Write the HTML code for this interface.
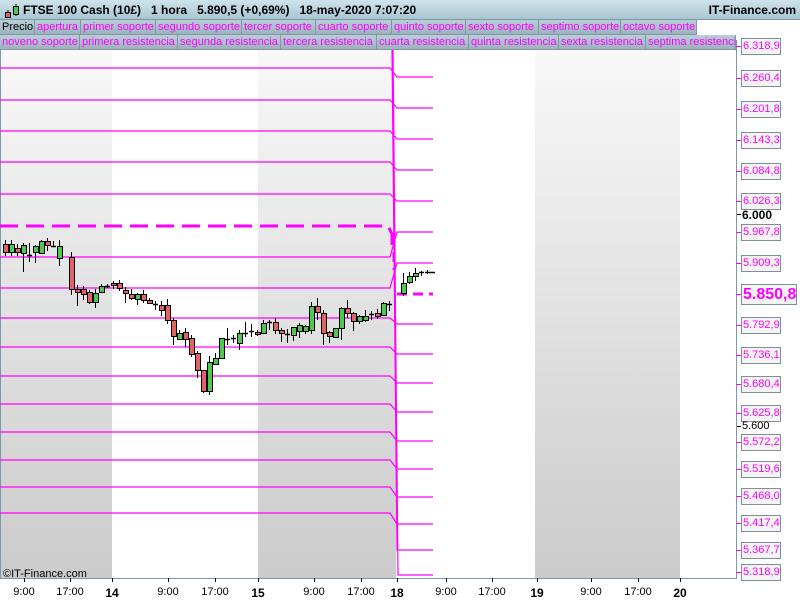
<!DOCTYPE html>
<html><head><meta charset="utf-8"><style>
*{margin:0;padding:0;box-sizing:border-box}
body{width:800px;height:600px;overflow:hidden;background:#fff;font-family:"Liberation Sans",sans-serif;position:relative}
#hdr{position:absolute;left:0;top:0;width:800px;height:20px;background:linear-gradient(#cfe3ea,#a8c6d2);border-bottom:1px solid #7f98a5;font-size:12px;font-weight:bold;line-height:20px}
.row{position:absolute;left:0;height:15px;display:flex;font-size:11px;line-height:14px}
.row div{background:linear-gradient(#b9cfd8,#9cb3be);border-right:1px solid #7f98a5;border-bottom:1px solid #7f98a5;color:#ff00ff;padding-left:2px;white-space:nowrap;overflow:hidden}
#ax div{position:absolute;font-size:11px}
.lb{position:absolute;left:741px;width:40px;height:17px;border:1px solid #7f8f99;background:#f4f4f4;color:#ff00ff;font-size:12px;line-height:15px;padding-left:1px;white-space:nowrap;overflow:hidden}
.tk{position:absolute;left:736px;width:5px;height:1px;background:#ff00ff}
.bt{position:absolute;top:586px;font-size:11px;transform:translateX(-50%)}
</style></head><body>
<div id="hdr"><svg style="position:absolute;left:3px;top:3px" width="16" height="16"><line x1="5" y1="7" x2="5" y2="15" stroke="#000"/><rect x="2.5" y="9.5" width="5" height="5" fill="#e06060" stroke="#000"/><line x1="13" y1="1" x2="13" y2="13" stroke="#000"/><rect x="10.5" y="3.5" width="5" height="8" fill="#4ec94e" stroke="#000"/></svg>
<span style="position:absolute;left:23px">FTSE 100 Cash (10£)&nbsp;&nbsp;&nbsp;1 hora&nbsp;&nbsp;&nbsp;5.890,5 (+0,69%)&nbsp;&nbsp;&nbsp;18-may-2020 7:07:20</span>
<span style="position:absolute;right:4px">IT-Finance.com</span></div>
<div class="row" style="top:20px"><div style="width:35px;color:#000">Precio</div><div style="width:46px">apertura</div><div style="width:75px">primer soporte</div><div style="width:86px">segundo soporte</div><div style="width:74px">tercer soporte</div><div style="width:76px">cuarto soporte</div><div style="width:74px">quinto soporte</div><div style="width:73px">sexto soporte</div><div style="width:82px">septimo soporte</div><div style="width:76px">octavo soporte</div></div>
<div class="row" style="top:35px"><div style="width:80px">noveno soporte</div><div style="width:98px">primera resistencia</div><div style="width:103px">segunda resistencia</div><div style="width:96px">tercera resistencia</div><div style="width:92px">cuarta resistencia</div><div style="width:90px">quinta resistencia</div><div style="width:87px">sexta resistencia</div><div style="width:90px">septima resistenci</div></div>
<svg id="ch" style="position:absolute;left:0;top:50px" width="736" height="528" viewBox="0 50 736 528">
<defs><linearGradient id="g" x1="0" y1="0" x2="0" y2="1"><stop offset="0" stop-color="#f8f8f8"/><stop offset="1" stop-color="#cbcbcb"/></linearGradient></defs>
<rect x="0" y="50" width="112" height="528" fill="url(#g)"/>
<rect x="258" y="50" width="138" height="528" fill="url(#g)"/>
<rect x="535" y="50" width="145" height="528" fill="url(#g)"/>
<line x1="0.5" y1="50" x2="0.5" y2="578" stroke="#7f98a5"/>
<g id="lines" stroke="#ff00ff" fill="none" stroke-width="1.2"></g>
<path d="M0 226H388l4 8v12" stroke="#ff00ff" stroke-width="3" fill="none" stroke-dasharray="18,8"/>
<path d="M394 252v18M397 294H433" stroke="#ff00ff" stroke-width="3" fill="none" stroke-dasharray="10,6"/>
<g id="cd"></g>
<text x="3" y="577" font-size="11" font-family="Liberation Sans">©IT-Finance.com</text>
</svg>
<div style="position:absolute;left:736px;top:40px;width:1px;height:539px;background:#7f98a5"></div>
<div style="position:absolute;left:0;top:578px;width:737px;height:1px;background:#7f98a5"></div>
<div id="ax"></div>
<script>
var L=[68,100,131,162,194,257,288,318,347,376,404,432,460,487,513];
var R=[77,108,139,170,201,232,263,324,354,383,412,441,469,497,524,550,575];
var s='';
for(var i=0;i<L.length;i++){s+='<path d="M0 '+L[i]+'H390L397 '+R[i]+'H433"/>';}
s+='<path d="M392 50L397 '+R[15]+'H433M393 50L398 '+R[16]+'H433"/>';
document.getElementById('lines').innerHTML=s;
var C=[[5,244,252,240,256],[11,252,244,240,256],[17,248,252,244,256],[23,253,245,243,272],[29,255,256,243,262],[35,252,246,245,263],[41,253,241,240,252],[47,241,245,238,251],[53,246,246,241,246],[59,258,246,240,266],[71,257,289,252,295],[77,289,292,285,306],[83,289,294,286,300],[89,292,302,290,304],[95,302,293,289,308],[101,292,286,284,293],[107,287,286,284,288],[113,283,285,281,289],[119,283,288,280,291],[125,290,293,287,303],[131,294,298,289,300],[137,299,294,293,305],[143,294,300,290,303],[149,300,303,298,304],[155,304,305,301,310],[161,305,310,301,316],[167,305,320,299,324],[173,320,336,318,345],[179,339,333,330,338],[185,332,339,328,347],[191,338,354,335,357],[197,353,370,351,378],[203,370,391,371,393],[209,391,362,356,395],[215,364,358,353,364],[221,358,338,338,357],[227,339,340,328,345],[233,338,338,335,343],[239,343,333,330,350],[245,333,333,322,337],[251,331,331,324,337],[257,332,334,330,336],[263,333,323,320,334],[269,323,322,320,330],[275,322,330,318,334],[281,330,333,328,342],[287,334,334,329,343],[293,335,327,327,341],[299,331,325,323,338],[305,331,326,325,334],[311,330,306,302,334],[317,306,312,298,320],[323,313,333,310,345],[329,332,336,331,343],[335,337,328,328,338],[341,328,308,307,340],[347,308,313,300,318],[353,313,321,312,331],[359,321,316,315,324],[365,320,316,310,322],[371,315,314,311,320],[377,313,316,309,319],[383,315,303,302,316],[389,304,305,301,311],[403,293,283,273,296],[409,282,276,272,284],[415,276,273,268,281],[421,272,272,271,276],[427,272,272,270,274],[432,272,272,272,272]];
var h='';
C.forEach(function(c){var x=c[0],o=c[1],cl=c[2],hi=c[3],lo=c[4];var t=Math.min(o,cl),bh=Math.abs(o-cl);
h+='<line x1="'+x+'.5" y1="'+hi+'" x2="'+x+'.5" y2="'+lo+'" stroke="#000"/>';
if(bh<2)h+='<line x1="'+(x-2)+'" y1="'+t+'.5" x2="'+(x+3)+'" y2="'+t+'.5" stroke="#000" stroke-width="1.5"/>';
else h+='<rect x="'+(x-2)+'.5" y="'+t+'.5" width="5" height="'+bh+'" fill="'+(cl<o?'#50c850':'#e06464')+'" stroke="#000"/>';});
document.getElementById('cd').innerHTML=h;
var A=[[46,'6.318,9'],[78,'6.260,4'],[109,'6.201,8'],[140,'6.143,3'],[171,'6.084,8'],[201,'6.026,3'],[232,'5.967,8'],[263,'5.909,3'],[325,'5.792,9'],[355,'5.736,1'],[384,'5.680,4'],[413,'5.625,8'],[442,'5.572,2'],[469,'5.519,6'],[496,'5.468,0'],[523,'5.417,4'],[550,'5.367,7'],[572,'5.318,9']];
var a='';
A.forEach(function(v){a+='<div class="tk" style="top:'+v[0]+'px"></div><div class="lb" style="top:'+(v[0]-8)+'px">'+v[1]+'</div>';});
a+='<div class="tk" style="top:294px"></div><div class="lb" style="top:284px;width:56px;height:21px;font-size:16px;font-weight:bold;line-height:19px">5.850,8</div>';
a+='<div style="position:absolute;left:737px;top:214px;width:4px;height:1px;background:#000"></div><div style="position:absolute;left:742px;top:208px;font-size:12px;font-weight:bold">6.000</div>';
a+='<div style="position:absolute;left:737px;top:426px;width:4px;height:1px;background:#000"></div><div style="position:absolute;left:742px;top:420px;font-size:11px">5.600</div>';
var B=[[24,'9:00'],[70,'17:00'],[112,'14',1],[168,'9:00'],[215,'17:00'],[258,'15',1],[314,'9:00'],[361,'17:00'],[397,'18',1],[446,'9:00'],[492,'17:00'],[537,'19',1],[591,'9:00'],[638,'17:00'],[680,'20',1]];
B.forEach(function(b){a+='<div style="position:absolute;left:'+b[0]+'px;top:578px;width:1px;height:4px;background:#000"></div><div class="bt" style="left:'+b[0]+'px;'+(b[2]?'font-weight:bold;font-size:12px':'')+'">'+b[1]+'</div>';});
document.getElementById('ax').innerHTML=a;
</script>
</body></html>
